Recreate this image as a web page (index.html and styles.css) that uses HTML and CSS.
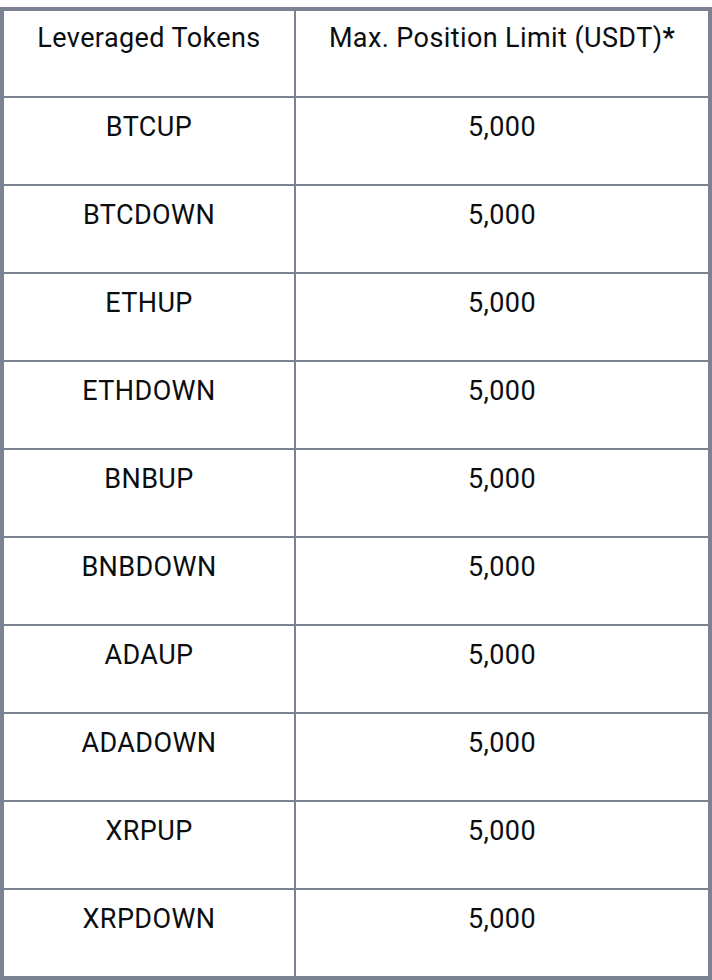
FILE: index.html
```html
<!DOCTYPE html>
<html>
<head>
<meta charset="utf-8">
<link rel="stylesheet" href="styles.css">
</head>
<body>
<table class="limits">
  <thead>
    <tr><th>Leveraged Tokens</th><th>Max. Position Limit (USDT)<b class="star">*</b></th></tr>
  </thead>
  <tbody>
    <tr><td>BTCUP</td><td>5,000</td></tr>
    <tr><td>BTCDOWN</td><td>5,000</td></tr>
    <tr><td>ETHUP</td><td>5,000</td></tr>
    <tr><td>ETHDOWN</td><td>5,000</td></tr>
    <tr><td>BNBUP</td><td>5,000</td></tr>
    <tr><td>BNBDOWN</td><td>5,000</td></tr>
    <tr><td>ADAUP</td><td>5,000</td></tr>
    <tr><td>ADADOWN</td><td>5,000</td></tr>
    <tr><td>XRPUP</td><td>5,000</td></tr>
    <tr><td>XRPDOWN</td><td>5,000</td></tr>
  </tbody>
</table>
</body>
</html>
```
FILE: styles.css
```css
html, body {
  margin: 0;
  padding: 0;
  background: #ffffff;
}
body {
  padding-top: 7px;
  font-family: Roboto, "Liberation Sans", Arial, sans-serif;
  color: #0b0e11;
}
.limits {
  width: 712px;
  border-collapse: collapse;
  border: 4px solid #7b8291;
  table-layout: fixed;
}
.limits th, .limits td {
  border: 2px solid #7b8291;
  font-size: 27px;
  letter-spacing: 0.4px;
  font-weight: normal;
  text-align: center;
  vertical-align: top;
  padding: 16px 8px 0;
  height: 70px;
  line-height: 26px;
}
.limits th {
  padding-top: 14px;
  height: 71px;
}
.limits th:first-child, .limits td:first-child {
  width: 274px;
}
.star {
  font-weight: bold;
}
```
